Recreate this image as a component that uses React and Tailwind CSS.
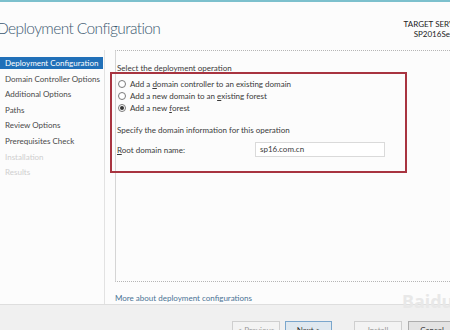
export default function App() {
  const nav = [
    { t: "Deployment Configuration", s: "sel" },
    { t: "Domain Controller Options" },
    { t: "Additional Options" },
    { t: "Paths" },
    { t: "Review Options" },
    { t: "Prerequisites Check" },
    { t: "Installation", s: "dis" },
    { t: "Results", s: "dis" },
  ];
  const Radio = ({ on }) => (
    <span className="w-[8px] h-[8px] rounded-full border border-[#7a7a7a] bg-white flex items-center justify-center shrink-0">
      {on && <span className="w-[4px] h-[4px] rounded-full bg-[#333]" />}
    </span>
  );
  return (
    <div
      className="relative w-[450px] h-[330px] overflow-hidden bg-[#fcfcfc] flex flex-col text-[#333]"
      style={{ fontFamily: "Lato, 'Open Sans', sans-serif" }}
    >
      <div className="h-[2px] bg-[#7cc0cd] shrink-0" />
      <div className="h-[48px] shrink-0 flex justify-between">
        <div className="ml-[-3px] pt-[16px] text-[15.5px] tracking-[-0.6px] leading-[21px] font-light text-[#3b5870] whitespace-nowrap">
          Deployment Configuration
        </div>
        <div className="mr-[-14px] pt-[17px] text-right text-[8px] leading-[10px] text-[#222] whitespace-nowrap">
          <div>TARGET SERVER</div>
          <div>SP2016Server</div>
        </div>
      </div>
      <div className="flex-1 flex min-h-0">
        <div className="w-[105px] shrink-0 border-r border-[#e2e2e2] h-[254px] pt-[7px] flex flex-col gap-[3.6px]">
          {nav.map((n) => (
            <div
              key={n.t}
              className={
                "h-[12px] leading-[12px] text-[8px] pl-[5px] whitespace-nowrap " +
                (n.s === "sel"
                  ? "bg-[#2170b8] text-white w-[103px]"
                  : n.s === "dis"
                  ? "text-[#cfcfcf]"
                  : "text-[#4a4a4a]")
              }
            >
              {n.t}
            </div>
          ))}
        </div>
        <div className="flex-1 pl-[10px] flex flex-col">
          <div className="h-[232px] border border-dotted border-[#b5b5b5] [border-left-style:solid] border-l-[#d5d5d5] border-r-0 pl-[1px] pt-[11px] text-[8px] text-[#3a3a3a]">
            <div className="h-[12px] leading-[12px]">Select the deployment operation</div>
            <div className="mt-[4px] flex flex-col">
              <div className="h-[12px] flex items-center gap-[4px] pl-[1px]">
                <Radio />
                <span>Add a <u>d</u>omain controller to an existing domain</span>
              </div>
              <div className="h-[12px] flex items-center gap-[4px] pl-[1px]">
                <Radio />
                <span>Add a new domain to an <u>e</u>xisting forest</span>
              </div>
              <div className="h-[12px] flex items-center gap-[4px] pl-[1px]">
                <Radio on />
                <span>Add a new <u>f</u>orest</span>
              </div>
            </div>
            <div className="mt-[10px] h-[12px] leading-[12px]">Specify the domain information for this operation</div>
            <div className="mt-[6px] flex items-center h-[15px]">
              <span className="w-[138px]"><u>R</u>oot domain name:</span>
              <div className="w-[130px] h-[15px] border border-[#dadada] bg-white pl-[4px] leading-[13px]">sp16.com.cn</div>
            </div>
          </div>
          <div className="pt-[10px] text-[8px] leading-[12px] text-[#4b7395]">More about deployment configurations</div>
        </div>
      </div>
      <div className="h-[26px] shrink-0 bg-[#f0f0f0] border-t border-[#dedede] flex pt-[16px] text-[8px]">
        <div className="ml-[232px] w-[48px] h-[20px] border border-[#cfcfcf] bg-[#f3f3f3] text-[#9a9a9a] text-center leading-[16px] shrink-0">&lt; Previous</div>
        <div className="ml-[5px] w-[47px] h-[20px] border border-[#7aa6cc] bg-[#dfe8ef] text-[#333] text-center leading-[16px] shrink-0">Next &gt;</div>
        <div className="ml-[22px] w-[48px] h-[20px] border border-[#cfcfcf] bg-[#f3f3f3] text-[#9a9a9a] text-center leading-[16px] shrink-0">Install</div>
        <div className="ml-[6px] w-[48px] h-[20px] border border-[#adadad] bg-[#e3e3e3] text-[#333] text-center leading-[16px] shrink-0">Cancel</div>
      </div>
      <div className="absolute left-[110px] top-[72px] w-[297px] h-[101px] border-2 border-[#a83440] pointer-events-none" />
      <div className="absolute left-[402px] top-[290px] text-[18px] font-bold leading-[22px] text-[#e8e8e8] whitespace-nowrap pointer-events-none" style={{ fontFamily: "'Noto Sans', 'Noto Sans CJK SC', sans-serif" }}>
        Baidu经验
      </div>
    </div>
  );
}
